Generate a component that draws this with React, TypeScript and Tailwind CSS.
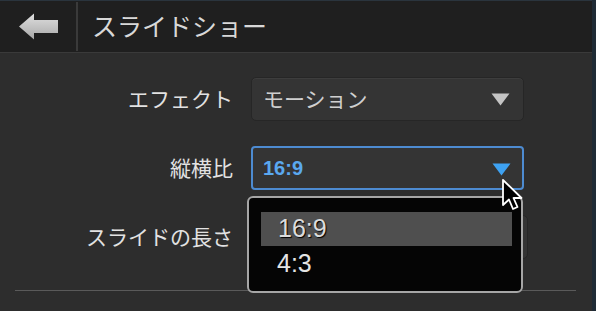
import React from "react";

const jp = { fontFamily: '"Noto Sans CJK JP", "Noto Sans", sans-serif' };
const lat = { fontFamily: '"Liberation Sans", Arial, sans-serif' };

function Tri({ color }: { color: string }) {
  return (
    <svg width="19" height="13" viewBox="0 0 19 13">
      <path d="M0.5 0.5 H18.5 L9.5 12.5 Z" fill={color} />
    </svg>
  );
}

function Row({ label, children }: { label: string; children?: React.ReactNode }) {
  return (
    <div className="flex items-center">
      <div className="w-[235px] pr-[2px] text-right text-[21px] text-[#e2e2e2]" style={jp}>
        {label}
      </div>
      <div className="ml-[16px]">{children}</div>
    </div>
  );
}

export default function App() {
  return (
    <div className="relative flex h-[311px] w-[596px] overflow-hidden bg-[#2d2d2d]">
      <div className="flex w-[592px] flex-col">
        <div className="flex h-[53px] items-stretch border-t border-[#2a343d] border-b border-b-[#3a3a3a] bg-[#1f1f1f]">
          <div className="flex w-[76px] items-center justify-center pl-[2px]">
            <svg width="40" height="27" viewBox="0 0 40 27">
              <defs>
                <linearGradient id="ag" x1="0" y1="0" x2="0" y2="1">
                  <stop offset="0" stopColor="#e0e0e0" />
                  <stop offset="1" stopColor="#a8a8a8" />
                </linearGradient>
              </defs>
              <path d="M0 13.5 L15 0.5 L15 7 L39 7 L39 20 L15 20 L15 26.5 Z" fill="url(#ag)" />
            </svg>
          </div>
          <div className="my-[1px] w-[2px] bg-[#3a3a3a]" />
          <div className="flex items-center pl-[14px] pb-[2px] text-[25px] text-[#d8d8d8]" style={jp}>
            スライドショー
          </div>
        </div>
        <div className="flex flex-col gap-[25px] pt-[24px]">
          <Row label="エフェクト">
            <div className="flex h-[44px] w-[273px] items-center justify-between rounded-[5px] border border-[#262626] bg-[#343434] pl-[11px] pr-[13px] shadow-[inset_0_1px_0_#3d3d3d]">
              <span className="text-[21px] text-[#cfcfcf]" style={jp}>
                モーション
              </span>
              <Tri color="#c4c4c4" />
            </div>
          </Row>
          <Row label="縦横比">
            <div className="flex h-[44px] w-[273px] items-center justify-between rounded-[4px] border-2 border-[#4d8bd1] bg-[#343434] pl-[10px] pr-[11px]">
              <span className="text-[20px] font-bold text-[#5aa8ef]" style={lat}>
                16:9
              </span>
              <div className="pt-[2px]">
                <Tri color="#3ea2f2" />
              </div>
            </div>
          </Row>
          <Row label="スライドの長さ">
            <div className="h-[44px] w-[277px] rounded-[5px] border border-[#262626] bg-[#343434]" />
          </Row>
        </div>
        <div className="mx-[15px] mt-[31px] h-[1px] w-[561px] bg-[#5a5a5a]" />
      </div>
      <div className="w-[4px] bg-[#1f2b35]" />

      <div className="absolute left-[247px] top-[196px] h-[97px] w-[276px] rounded-[6px] border-2 border-[#a6a6a6] bg-[#050505] pt-[14px] pl-[12px]">
        <div
          className="flex h-[34px] w-[251px] items-center pl-[17px] text-[25px] text-[#dcdcdc] bg-[#4f4f4f] [text-shadow:1px_1px_1px_#000]"
          style={lat}
        >
          16:9
        </div>
        <div className="flex h-[36px] items-center pl-[16px] text-[25px] text-[#e4e4e4]" style={lat}>
          4:3
        </div>
      </div>

      <svg className="absolute left-[500px] top-[178px]" width="28" height="36" viewBox="0 0 28 36">
        <path
          d="M3 2 L3 27 L9 21.5 L13 31 L17.5 29 L13.5 20 L21.5 20 Z"
          fill="#000"
          stroke="#fff"
          strokeWidth="1.8"
          strokeLinejoin="round"
        />
      </svg>
    </div>
  );
}
